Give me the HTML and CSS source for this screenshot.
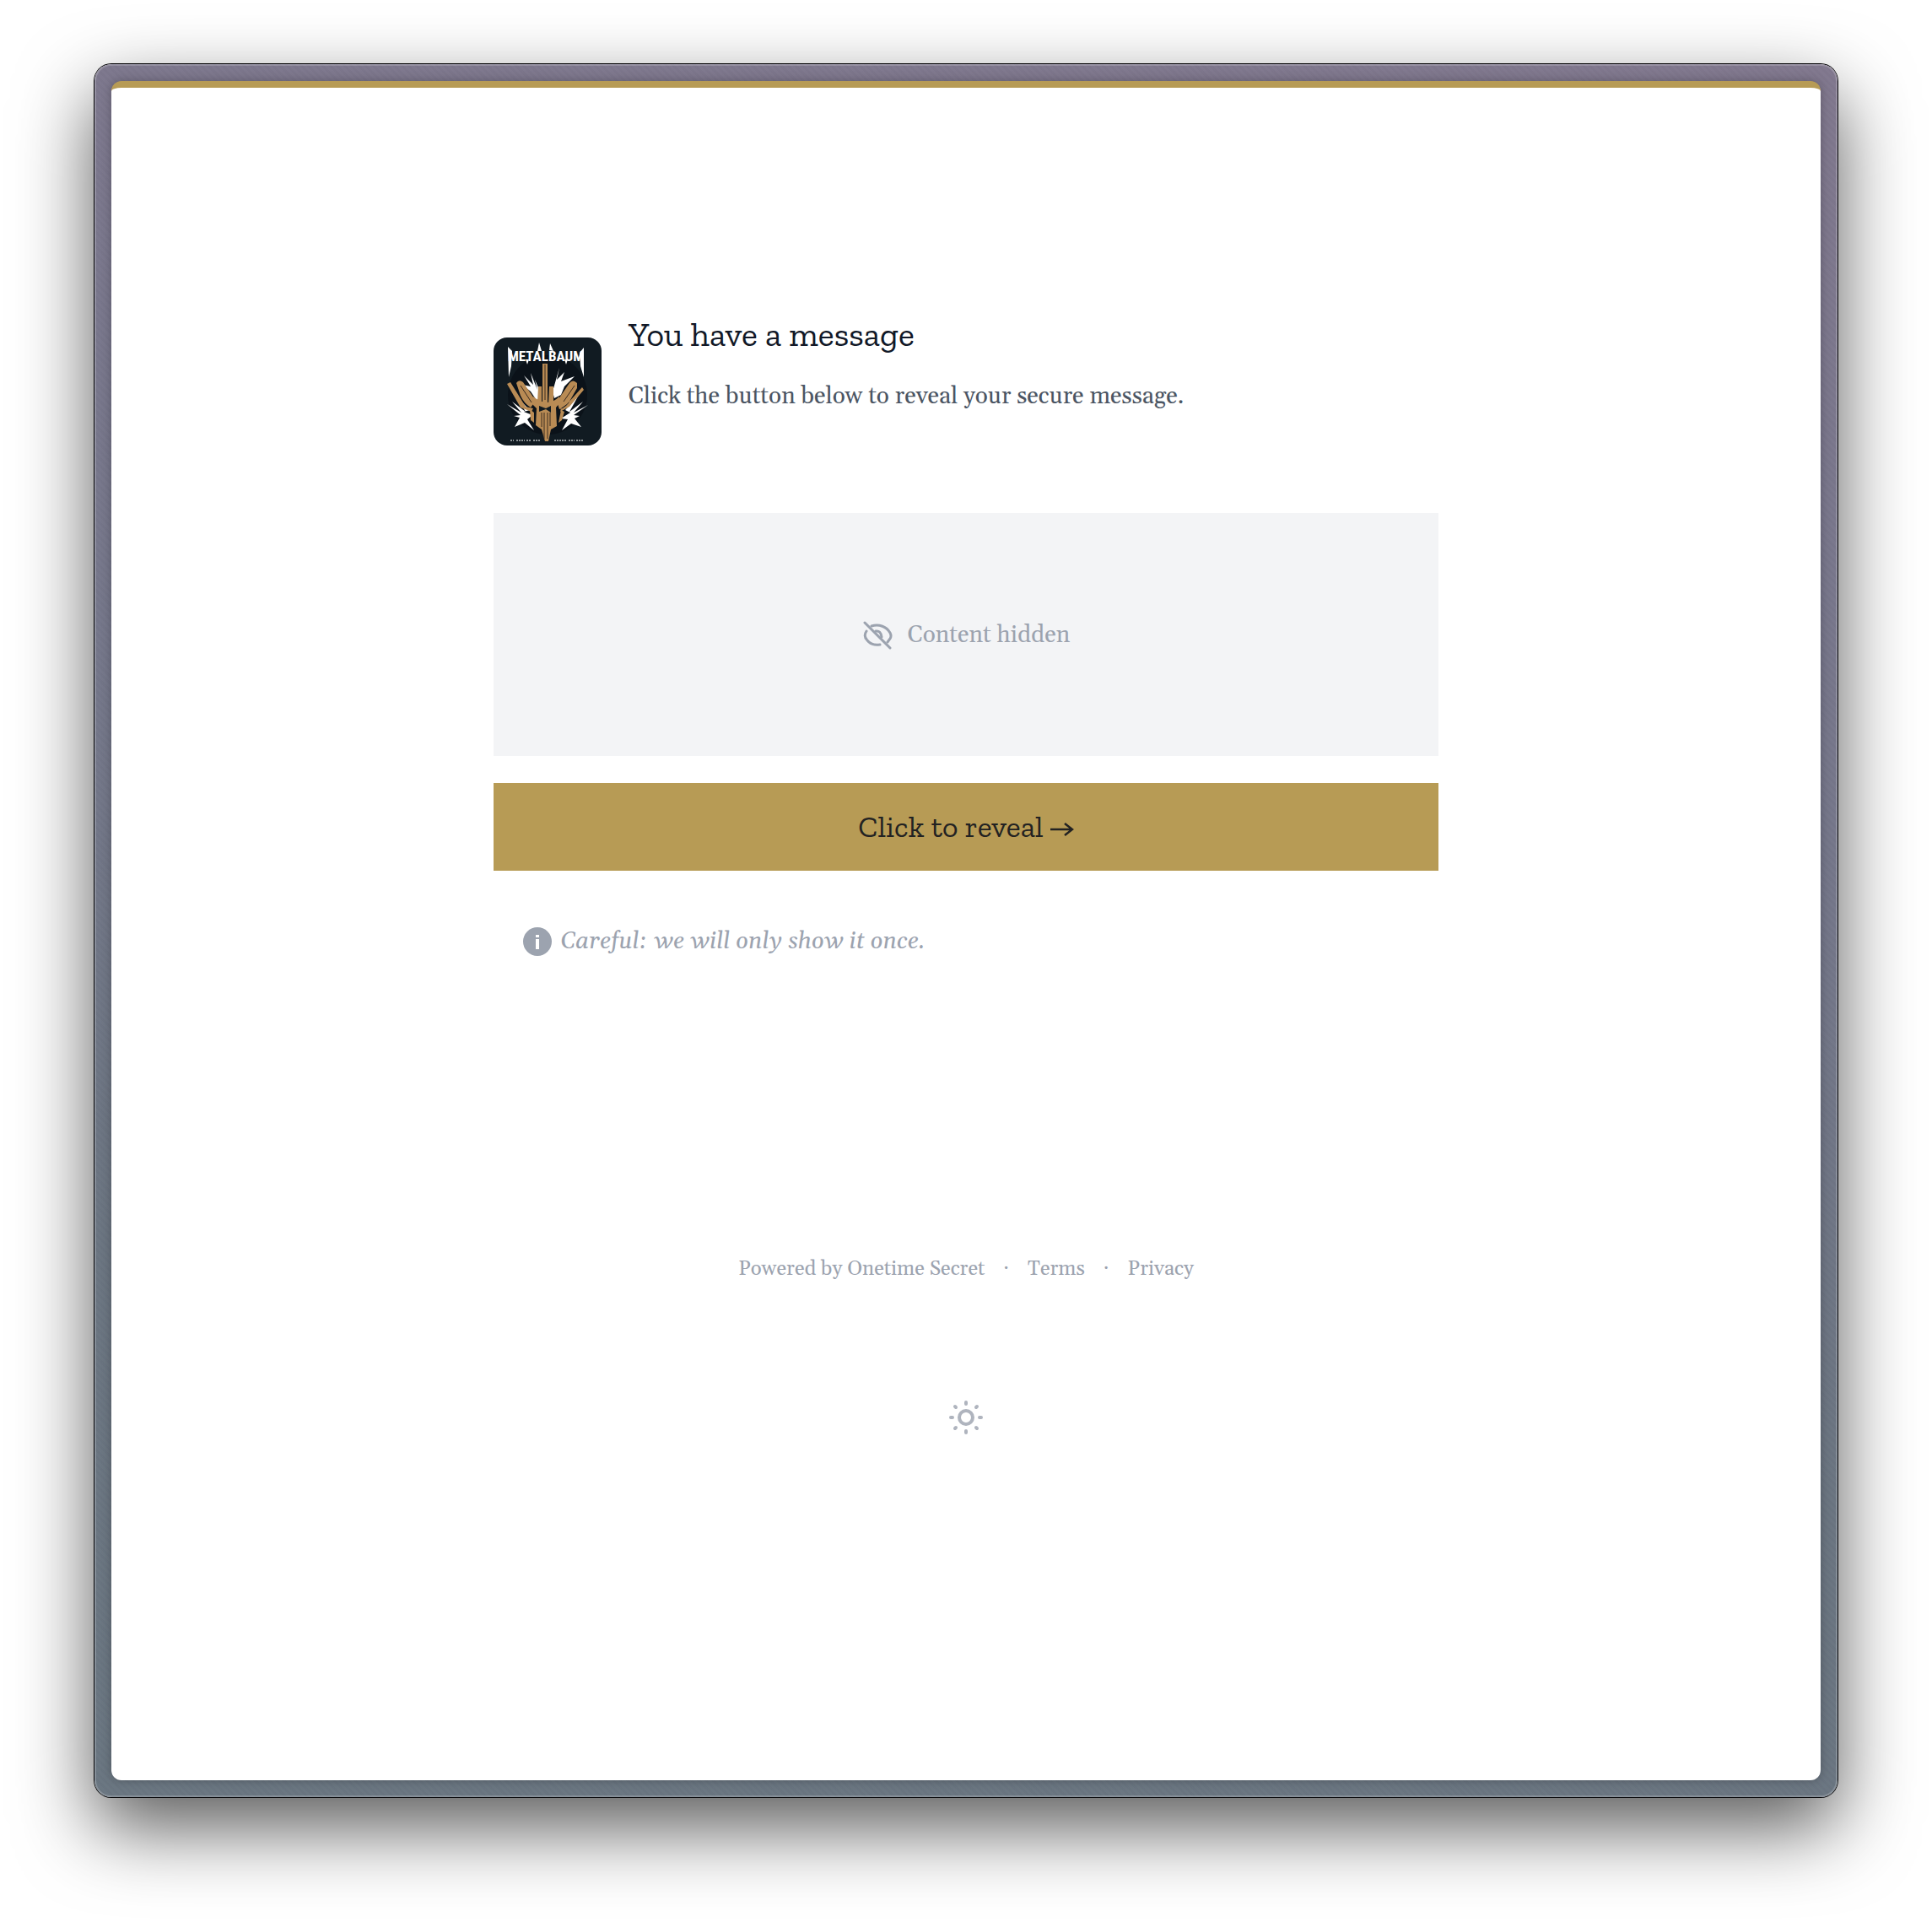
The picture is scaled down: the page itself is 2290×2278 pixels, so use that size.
FILE: index.html
```html
<!DOCTYPE html>
<html lang="en">
<head>
<meta charset="utf-8">
<meta name="viewport" content="width=device-width, initial-scale=1">
<title>You have a message</title>
<link rel="stylesheet" href="styles.css">
</head>
<body>
<div class="window">
  <div class="page">
    <main class="secret">
      <header class="intro">
        <svg class="logo" viewBox="0 0 128 128" role="img" aria-label="Metalbaum">
          <rect width="128" height="128" fill="#111b22"/>
          <circle cx="64" cy="68" r="47" fill="#0b1219"/>
          <g fill="#fff">
            <path d="M55 64 49 50 52 62 44 42 47 56 36 45 44 58 34 56 44 64 52 76ZM70 64 78 36 75 50 84 41 80 52 96 46 84 58 80 68 72 72Z"/>
            <path d="M16 79 33 89 22 76 38 88 27 70 43 86 36 88 46 92 40 97 48 110 37 101 25 106 31 95 24 93 32 92ZM112 80 95 89 106 76 90 88 101 68 85 86 91 89 80 96 88 97 81 110 92 102 104 106 96 96 102 93 95 92Z"/>
          </g>
          <g fill="#b98b54">
            <path d="M58 31h6v48h-6ZM53 58h4v21l-5-2ZM66 58h5v18l-6 3Z"/>
            <path d="M27 54q3-5 8-1l15 22-6 8q-8-5-12-14ZM99 54q-5-5-9 0L75 76l3 9q9-2 13-11l8-14ZM16 55l4-2 18 29 9 2-2 4-13-5ZM105 59l2 3-17 20-11 6 1-4 7-5Z"/>
            <path d="M47 70q17 14 31 0v8l-4 5 1 22-7 4-3 14-4 0-4-14-7-5 1-20-5-5Z"/>
            <path d="M43 85 48 89v12l-4-3ZM80 86l4 2-3 10-4 3Z"/>
          </g>
          <path d="M54 81l8 3 6-3v8l-6-4-8 3Z" fill="#111b22"/>
          <g fill="none" stroke="#3a2c20" stroke-width="1">
            <path d="M61 32v42M57 89v17M60 89v31M64 89v31M67 89v16M32 57l13 20M96 57 83 76"/>
          </g>
          <text class="logo-name" x="62" y="28" text-anchor="middle">METALBAUM</text>
          <g fill="#fff">
            <path d="M17 11 22 16 21 34 18 47ZM107 12 102 18 103 34 107 47ZM54 6l3 10h-5ZM67 7l4 9-5-1ZM38 26h4l-2 6ZM84 26h4l-2 6Z"/>
          </g>
          <g stroke="#8e9497" stroke-width="2" fill="none">
            <path d="M20 122h4M27 122h10M39 122h6M47 122h8" stroke-dasharray="2 1"/>
            <path d="M72 122h14M89 122h7M98 122h8" stroke-dasharray="2 1"/>
          </g>
        </svg>
        <div class="intro-text">
          <h1>You have a message</h1>
          <p>Click the button below to reveal your secure message.</p>
        </div>
      </header>
      <section class="hidden-box">
        <svg class="eye" viewBox="0 0 36 36" fill="none" stroke="currentColor" stroke-width="3" stroke-linecap="round" aria-hidden="true">
          <path d="M3 3 33 33"/>
          <path d="M11 7c9-3 18 1 22 8q2 4 0 7l-3 4M5 13q-4 6 1 11c4 5 9 6 15 5"/>
          <path d="M16 13q6-1 7 7"/>
        </svg>
        <span>Content hidden</span>
      </section>
      <button class="reveal" type="button">Click to reveal <svg class="arrow" viewBox="0 0 28 18" fill="none" stroke="currentColor" stroke-width="2.5" aria-hidden="true"><path d="M0 9h26M17 2l9 7-9 7"/></svg></button>
      <p class="notice">
        <svg class="info" viewBox="0 0 34 34" aria-hidden="true"><circle cx="17" cy="17" r="17" fill="#9ca3af"/><path d="M15 9h4v3h-4ZM15 14h4v12h-4Z" fill="#fff"/></svg>
        <span>Careful: we will only show it once.</span>
      </p>
    </main>
    <footer class="footer">
      <nav class="links">
        <a href="#">Powered by Onetime Secret</a><span>·</span><a href="#">Terms</a><span>·</span><a href="#">Privacy</a>
      </nav>
      <button class="theme" type="button" aria-label="Toggle theme">
        <svg viewBox="0 0 40 40" fill="none" stroke="currentColor" stroke-width="4" stroke-linecap="round" aria-hidden="true">
          <circle cx="20" cy="20" r="8"/>
          <path d="M20 2v2M20 36v2M2 20h2M36 20h2M7 7l1 1M32 32l1 1M33 7l-1 1M8 32l-1 1"/>
        </svg>
      </button>
    </footer>
  </div>
</div>
</body>
</html>
```
FILE: styles.css
```css
* { box-sizing: border-box; }
html, body { height: 100%; }
body {
  margin: 0;
  padding: 76px 112px 148px;
  background: #fff;
  color: #111827;
  font-family: Gelasio, Georgia, "Liberation Serif", serif;
}
.window {
  min-height: 100%;
  display: flex;
  padding: 20px;
  border-radius: 20px;
  background:
    repeating-linear-gradient(45deg, #0000 0 3px, #00001406 3px 6px),
    linear-gradient(188deg, #82798f 0%, #7a788d 25%, #76788b 42%, #6c7682 72%, #6b7782 100%);
  box-shadow: 0 0 0 1px #050507, inset 0 0 0 2px #ffffff30, 0 36px 90px rgba(0, 0, 0, .65);
}
.page {
  flex: 1;
  padding: 272px 24px 0;
  border-top: 8px solid #b79b55;
  border-radius: 12px;
  background: #fff;
  box-shadow: 0 0 12px #0004;
}
.secret { max-width: 1120px; margin: 0 auto; }
.intro { display: flex; align-items: flex-start; gap: 32px; }
.logo { width: 128px; height: 128px; margin-top: 24px; border-radius: 16px; flex: none; }
.logo-name { font: bold 17px "Roboto Condensed", "Liberation Sans", sans-serif; fill: #fff; }
h1 {
  margin: 0 0 32px;
  font: 400 40px/40px "Zilla Slab", "DejaVu Serif Condensed", "DejaVu Serif", serif;
}
.intro p { margin: 0; font-size: 28px; line-height: 44px; color: #4b5563; }
.hidden-box {
  display: flex;
  align-items: center;
  justify-content: center;
  gap: 18px;
  height: 288px;
  margin-top: 80px;
  padding-top: 2px;
  background: #f3f4f6;
  color: #9ca3af;
  font-size: 28px;
}
.eye { width: 36px; height: 36px; }
.reveal {
  width: 100%;
  height: 104px;
  margin-top: 32px;
  border: 0;
  background: #b79b55;
  color: #222;
  font: 400 36px/40px "Zilla Slab", "DejaVu Serif Condensed", "DejaVu Serif", serif;
}
.arrow { width: 28px; height: 18px; }
.notice {
  display: flex;
  align-items: center;
  gap: 10px;
  margin: 64px 0 0;
  padding-left: 35px;
  color: #9ca3af;
  font-size: 28px;
  font-style: italic;
  line-height: 40px;
}
.info { width: 34px; height: 34px; }
.footer { margin-top: 352px; display: flex; flex-direction: column; align-items: center; }
.links { display: flex; gap: 22px; font-size: 24px; line-height: 32px; color: #9ca3af; }
.links a { color: inherit; text-decoration: none; }
.theme { margin-top: 140px; padding: 0; border: 0; background: none; color: #afb4be; }
.theme svg { display: block; width: 40px; height: 40px; }
```
